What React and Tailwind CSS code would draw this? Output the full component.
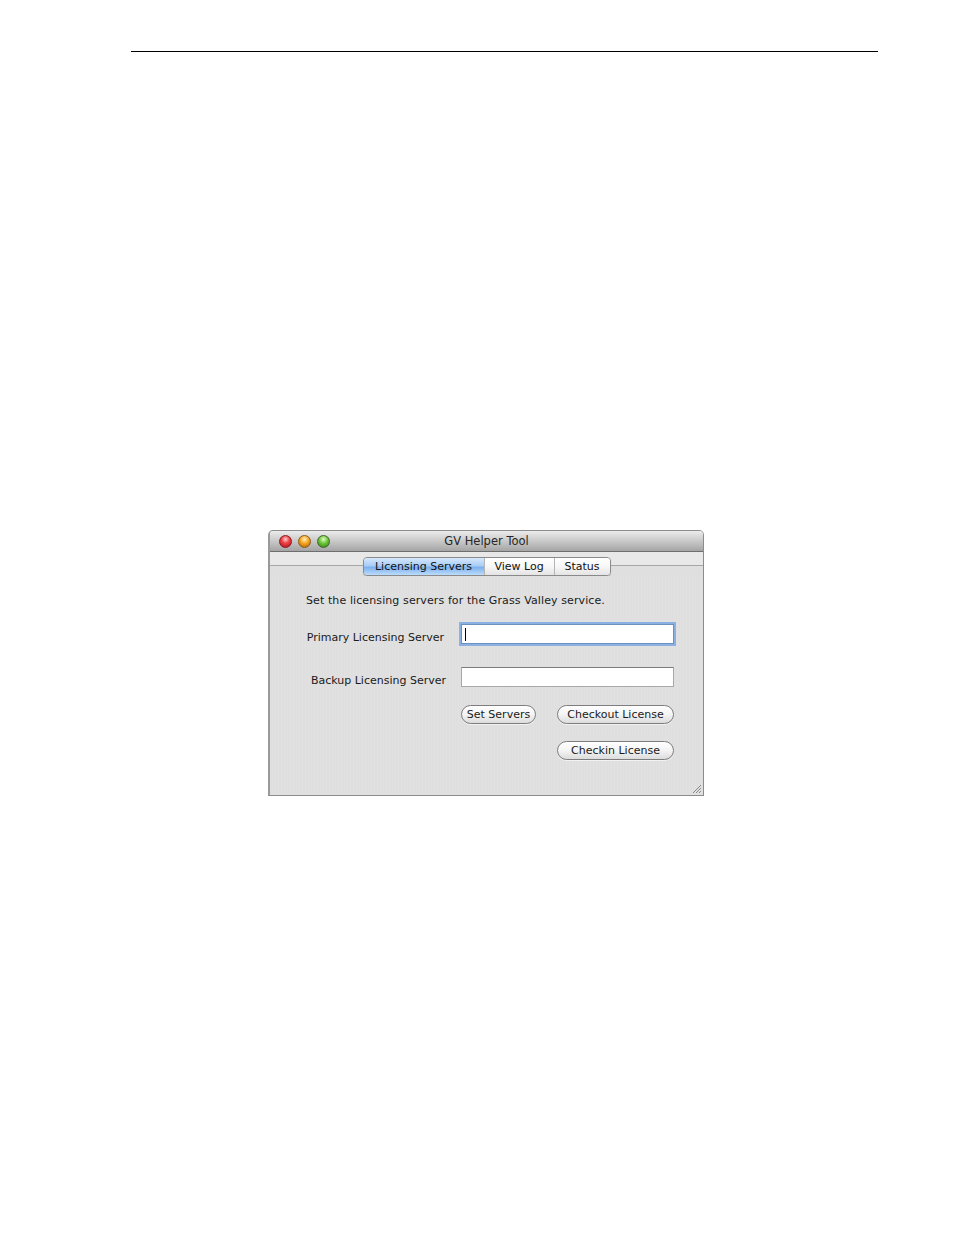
import { useState } from "react";

const font = "font-['DejaVu_Sans',sans-serif]";

function TrafficLight({ color }) {
  const styles = {
    red: "bg-[radial-gradient(circle_at_50%_30%,#ffd0d0_0%,#f0454a_40%,#a80d12_100%)] border-[#8a1a1c]",
    yellow: "bg-[radial-gradient(circle_at_50%_30%,#fff0c0_0%,#f5a623_45%,#a85a05_100%)] border-[#8e5a14]",
    green: "bg-[radial-gradient(circle_at_50%_30%,#e0ffc8_0%,#6cc43a_45%,#2f7a12_100%)] border-[#3f6a25]",
  };
  return <span className={`block w-[13px] h-[13px] rounded-full border ${styles[color]}`} />;
}

function AquaButton({ children, width }) {
  return (
    <button
      className={`${width} h-[19px] rounded-full border border-[#7d7d7d] bg-gradient-to-b from-white via-[#f4f4f4] to-[#dcdcdc] text-[11px] text-[#1a1a1a] leading-none shadow-[0_1px_0_rgba(255,255,255,0.6)]`}
    >
      {children}
    </button>
  );
}

function Tabs() {
  const [active, setActive] = useState(0);
  const tabs = [
    { label: "Licensing Servers", w: "w-[120px]" },
    { label: "View Log", w: "w-[70px]" },
    { label: "Status", w: "w-[56px]" },
  ];
  return (
    <div className="flex h-[19px] rounded-[4px] border border-[#8a8a8a] overflow-hidden shadow-[0_1px_1px_rgba(0,0,0,0.15)]">
      {tabs.map((t, i) => (
        <button
          key={t.label}
          onClick={() => setActive(i)}
          className={`${t.w} h-full text-[11px] leading-none text-[#111] ${
            i > 0 ? "border-l border-[#b5b5b5]" : ""
          } ${
            active === i
              ? "bg-[linear-gradient(to_bottom,#d6e8fc_0%,#a9cdf6_45%,#7db1ee_55%,#bcdcfb_100%)]"
              : "bg-gradient-to-b from-white via-[#f7f7f7] to-[#e4e4e4]"
          }`}
        >
          {t.label}
        </button>
      ))}
    </div>
  );
}

function HelperWindow() {
  return (
    <div className={`w-[436px] h-[266px] ml-[268px] mt-[478px] flex flex-col rounded-t-[5px] border border-[#8c8c8c] border-l-2 border-l-[#9a9a9a] overflow-hidden ${font}`}>
      {/* title bar */}
      <div className="h-[21px] shrink-0 flex items-center relative bg-gradient-to-b from-[#ececec] via-[#c9c9c9] to-[#a5a5a5] border-b border-[#6e6e6e]">
        <div className="flex gap-[6px] pl-[9px]">
          <TrafficLight color="red" />
          <TrafficLight color="yellow" />
          <TrafficLight color="green" />
        </div>
        <div className="absolute inset-0 flex items-center justify-center pt-[2px] text-[11.5px] text-[#262626] pointer-events-none">
          GV Helper Tool
        </div>
      </div>

      {/* tab strip */}
      <div className="shrink-0 pt-[5px] flex justify-center bg-[linear-gradient(to_bottom,#e8e8e8_0,#e8e8e8_13px,#a6a6a6_13px,#a6a6a6_14px,#dfdfdf_14px)]">
        <Tabs />
      </div>

      {/* content */}
      <div className="flex-1 flex flex-col bg-[repeating-linear-gradient(90deg,#dfdfdf_0,#dfdfdf_2px,#e1e1e1_2px,#e1e1e1_3px)] text-[11px] text-[#1a1a1a]">
        <p className="pt-[18px] pl-[36px] leading-[14px] tracking-[0.1px]">Set the licensing servers for the Grass Valley service.</p>

        <div className="grid grid-cols-[174px_213px] gap-x-[17px] items-center mt-[16px]">
          <label className="text-right translate-y-[4px]">Primary Licensing Server</label>
          <div className="h-[20px] bg-white border border-[#6f8fbd] shadow-[0_0_0_2px_#8ab0e4] flex items-center pl-[3px]">
            <span className="w-px h-[13px] bg-black" />
          </div>
          <label className="text-right mt-[23px] pl-[4px] -mr-[2px] translate-y-[4px]">Backup Licensing Server</label>
          <div className="h-[20px] mt-[23px] bg-white border border-[#a8a8a8] border-t-[#7c7c7c]" />
        </div>

        <div className="flex pl-[191px] mt-[18px] gap-[21px]">
          <AquaButton width="w-[75px]">Set Servers</AquaButton>
          <AquaButton width="w-[117px]">Checkout License</AquaButton>
        </div>
        <div className="flex pl-[287px] mt-[17px]">
          <AquaButton width="w-[117px]">Checkin License</AquaButton>
        </div>

        <div className="flex-1 flex justify-end items-end pr-[1px] pb-[1px]">
          <svg width="11" height="11" viewBox="0 0 11 11">
            <path d="M10 2 L2 10 M10 5 L5 10 M10 8 L8 10" stroke="#8a8a8a" strokeWidth="1" />
          </svg>
        </div>
      </div>
    </div>
  );
}

export default function App() {
  return (
    <div className="w-[954px] h-[1235px] bg-white pt-[51px]">
      <div className="ml-[131px] w-[747px] h-px bg-black" />
      <HelperWindow />
    </div>
  );
}
